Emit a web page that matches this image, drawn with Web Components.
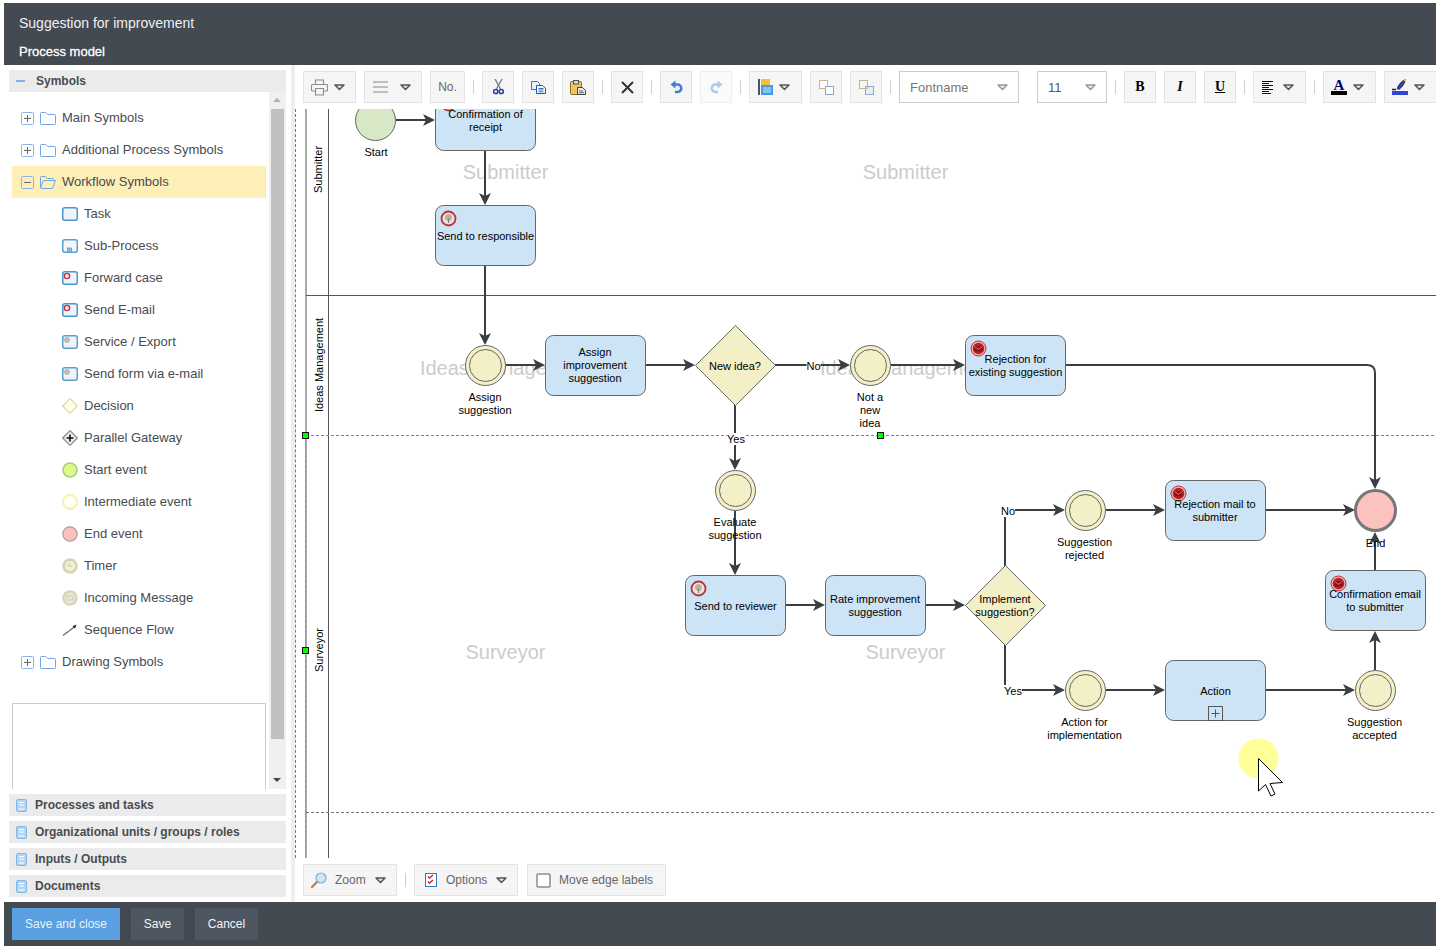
<!DOCTYPE html>
<html lang="en">
<head>
<meta charset="utf-8">
<title>Process model</title>
<style>
    html, body { margin: 0; height: 100%; background: #fff; overflow: hidden; }
    body { font-family: "Liberation Sans", Arial, sans-serif; }
</style>
</head>
<body>
<process-editor></process-editor>
<script>
const ICONS = {
    plus: `<svg width="13" height="13"><rect x=".5" y=".5" width="12" height="12" rx="1" fill="#fff" stroke="#8db3e6"/><path d="M3 6.5h7M6.5 3v7" stroke="#667" fill="none"/></svg>`,
    minus: `<svg width="13" height="13"><rect x=".5" y=".5" width="12" height="12" rx="1" fill="none" stroke="#8db3e6"/><path d="M3 6.5h7" stroke="#667" fill="none"/></svg>`,
    folder: `<svg width="16" height="13"><path d="M.5 11.5v-10a1 1 0 0 1 1-1h4l2 2h7a1 1 0 0 1 1 1v8a1 1 0 0 1-1 1h-13a1 1 0 0 1-1-1z" fill="#fff" stroke="#6ea6e4"/></svg>`,
    folderOpen: `<svg width="16" height="13"><path d="M.5 12V1.500a1 1 0 0 1 1-1h4l2 2h5a1 1 0 0 1 1 1V5M.5 12l3-7.500h12l-3 8H1z" fill="none" stroke="#6ea6e4"/></svg>`,
    task: `<svg width="16" height="14"><rect x=".75" y=".75" width="14.500" height="12.500" rx="2" fill="#eef3fb" stroke="#4d97cc" stroke-width="1.500"/></svg>`,
    sub: `<svg width="16" height="14"><rect x=".75" y=".75" width="14.500" height="12.500" rx="2" fill="#f3f6fb" stroke="#5b9fd0" stroke-width="1.500"/><rect x="5.500" y="9" width="4" height="4" fill="#8fb9da" stroke="#5b9fd0" stroke-width=".8"/></svg>`,
    forward: `<svg width="16" height="14"><rect x=".75" y=".75" width="14.500" height="12.500" rx="2" fill="#eef3fb" stroke="#4d97cc" stroke-width="1.500"/><circle cx="5" cy="5" r="2.600" fill="#eee" stroke="#c2343c" stroke-width="1.400"/></svg>`,
    service: `<svg width="16" height="14"><rect x=".75" y=".75" width="14.500" height="12.500" rx="2" fill="#eef3fb" stroke="#5b9fd0" stroke-width="1.500"/><circle cx="5" cy="5" r="3" fill="#bbb"/></svg>`,
    decision: `<svg width="16" height="16"><path d="M8 .7L15.300 8 8 15.300.7 8z" fill="#fffef6" stroke="#e2da92" stroke-width="1.200"/></svg>`,
    gateway: `<svg width="16" height="16"><path d="M8 .7L15.300 8 8 15.300.7 8z" fill="#eee" stroke="#8a8a8a" stroke-width="1.200"/><path d="M4.500 8h7M8 4.500v7" stroke="#111" stroke-width="1.600"/></svg>`,
    start: `<svg width="16" height="16"><circle cx="8" cy="8" r="7" fill="#dcf88a" stroke="#a5cf78" stroke-width="1.600"/></svg>`,
    inter: `<svg width="16" height="16"><circle cx="8" cy="8" r="7" fill="#fffff4" stroke="#f6f0ae" stroke-width="1.800"/></svg>`,
    end: `<svg width="16" height="16"><circle cx="8" cy="8" r="7.200" fill="#fdbfbf" stroke="#ab9c9c" stroke-width="1.200"/></svg>`,
    timer: `<svg width="16" height="16"><circle cx="8" cy="8" r="7.800" fill="#d6d6b2"/><circle cx="8" cy="8" r="5" fill="#f0f0e0"/><path d="M8 5.500L5.500 8H10.500" stroke="#c9c9a6" fill="none"/></svg>`,
    message: `<svg width="16" height="16"><circle cx="8" cy="8" r="7.800" fill="#d6d6b2"/><circle cx="8" cy="8" r="5.500" fill="#e9e9d2"/><rect x="5" y="6" width="6" height="4" fill="none" stroke="#ccc"/></svg>`,
    flow: `<svg width="16" height="14"><path d="M1 12.500L13 3.500" stroke="#666" stroke-width="1.200"/><path d="M10.500 3.200L14.500 1.500 13 5.500z" fill="#222"/></svg>`,
    book: `<svg width="11" height="13"><rect x=".5" y=".5" width="10" height="12" rx="1.500" fill="#b4d4f2" stroke="#7fb6e8"/><path d="M3 3.500h5M3 6h5M2.500 10h6" stroke="#fff" fill="none"/></svg>`,
    caret: `<svg width="11" height="7"><path d="M1 1h9L5.500 5.500z" fill="#e4e4e4" stroke="#555" stroke-width="1.500" stroke-linejoin="round"/></svg>`,
    caretLight: `<svg width="11" height="7"><path d="M1 1h9L5.500 5.500z" fill="#eee" stroke="#999" stroke-width="1.500" stroke-linejoin="round"/></svg>`,
    printer: `<svg width="17" height="17"><path d="M4.500 5.500V1h8v4.500M4.500 12H1.500a1 1 0 0 1-1-1V6.500a1 1 0 0 1 1-1h14a1 1 0 0 1 1 1V11a1 1 0 0 1-1 1h-3M4.500 9.500h8V16h-8z" fill="none" stroke="#8c8c8c" stroke-width="1.100"/></svg>`,
    menu: `<svg width="15" height="12"><path d="M0 1h15M0 6h15M0 11h15" stroke="#aaa" stroke-width="1.600"/></svg>`,
    cut: `<svg width="11" height="16"><path d="M2 0l5.500 10M9 0L3.500 10" stroke="#77808c" stroke-width="1.400" fill="none"/><circle cx="2.700" cy="12.500" r="2.100" fill="none" stroke="#26409c" stroke-width="1.500"/><circle cx="8.300" cy="12.500" r="2.100" fill="none" stroke="#26409c" stroke-width="1.500"/></svg>`,
    copy: `<svg width="15" height="13"><path d="M.5.500h6l2 2v6h-8z" fill="#eaf1fb" stroke="#3a6fc4"/><path d="M5.500 4.500h6l3 2.500v5.500h-9z" fill="#fff" stroke="#2255b0"/><path d="M7.500 7.500h5M7.500 9h5M7.500 10.800h5" stroke="#3a6fc4"/></svg>`,
    paste: `<svg width="16" height="15"><rect x=".5" y="1.500" width="11" height="13" rx="1" fill="#ecc560" stroke="#8a6a28"/><rect x="3.500" y=".5" width="5" height="3.500" fill="#d9d9d9" stroke="#555"/><path d="M7.500 7.500h5l3 3v4h-8z" fill="#e8e8f0" stroke="#444"/><path d="M9 11h4M9 12.700h5" stroke="#667"/></svg>`,
    close: `<svg width="13" height="13"><path d="M1 1l11 11M12 1L1 12" stroke="#333" stroke-width="2"/></svg>`,
    undo: `<svg width="13" height="14"><path d="M4.500 4.500h3a3.300 3.300 0 0 1 0 7.500H5" fill="none" stroke="#3c80dc" stroke-width="2.600"/><path d="M5.500.5v8L.5 4.500z" fill="#3c80dc"/></svg>`,
    redo: `<svg width="13" height="14"><path d="M8.500 4.500h-3a3.300 3.300 0 0 0 0 7.500H8" fill="none" stroke="#a9c9ee" stroke-width="2.600"/><path d="M7.500.5v8l5-4z" fill="#a9c9ee"/></svg>`,
    save: `<svg width="15" height="16"><rect x="0" y="0" width="2" height="16" fill="#47506e"/><rect x="3" y="0" width="9" height="6" fill="#f0c23c"/><rect x="3" y="6" width="12" height="10" fill="#4a9be4"/><rect x="5" y="8" width="8" height="6" fill="#84c2f2"/></svg>`,
    front: `<svg width="15" height="15"><rect x=".5" y=".5" width="8" height="8" fill="#fff" stroke="#c2b68a"/><rect x="6.500" y="6.500" width="8" height="8" fill="#fff" stroke="#8ea5c4"/></svg>`,
    back: `<svg width="15" height="15"><rect x="6.500" y="6.500" width="8" height="8" fill="#e6eef8" stroke="#8ea5c4"/><rect x=".5" y=".5" width="8" height="8" fill="none" stroke="#c2b68a"/></svg>`,
    align: `<svg width="12" height="13"><path d="M0 .5h11M0 2.500h7M0 4.500h11M0 6.500h7M0 8.500h11M0 10.500h7M0 12.500h9" stroke="#111"/></svg>`,
    fontColor: `<span style="display:block;width:16px;text-align:center;font:700 15px/12px 'Liberation Serif',serif;color:#000080;border-bottom:4px solid #000">A</span>`,
    pen: `<svg width="16" height="16"><path d="M5 9.500C6.500 6 9 2 13.500.5 13 4 10.500 8 7 10.500z" fill="#2b3fc0" stroke="#111" stroke-width=".6"/><path d="M11.500 1L14 .5 13.500 3z" fill="#ee3"/><path d="M0 10.500h4" stroke="#223" stroke-width="1.500"/><rect y="12" width="16" height="4" fill="#3344dd"/></svg>`,
    zoom: `<svg width="16" height="16"><path d="M1 15l5-5" stroke="#c8813c" stroke-width="2.400" stroke-linecap="round"/><circle cx="10" cy="6" r="5" fill="#cfe6f7" stroke="#7daed2" stroke-width="1.200"/></svg>`,
    options: `<svg width="12" height="14"><rect x=".5" y=".5" width="11" height="13" fill="#fff" stroke="#2f78d2"/><path d="M3 3.500l1.500 1.500L8 2M3 8.500l1.500 1.500L8 7" fill="none" stroke="#c82020" stroke-width="1.400"/></svg>`,
    box: `<svg width="15" height="15"><rect x="1" y="1" width="13" height="13" rx="1" fill="#fff" stroke="#8c8c8c" stroke-width="1.500"/></svg>`
};

class FormHeader extends HTMLElement {
    constructor() {
        super();
        this.attachShadow({ mode: 'open' });
        this.shadowRoot.innerHTML = `
        <style>
            :host { display: block; height: 62px; background: #434a52; color: #fff; padding: 12px 0 0 15px; box-sizing: border-box; }
            .title { font-size: 14px; line-height: 16px; color: #eef0f2; }
            .sub { font-size: 13px; line-height: 16px; margin-top: 13px; -webkit-text-stroke: .3px #fff; }
        </style>
        <div class="title"><slot name="title"></slot></div>
        <div class="sub"><slot name="sub"></slot></div>`;
    }
}
customElements.define('form-header', FormHeader);

class TreeItem extends HTMLElement {
    constructor() {
        super();
        this.attachShadow({ mode: 'open' });
    }
    connectedCallback() {
        const expander = this.getAttribute('expander');
        const icon = ICONS[this.getAttribute('icon')];
        this.shadowRoot.innerHTML = `
        <style>
            :host { display: flex; align-items: center; height: 32px; box-sizing: border-box; font-size: 13px; color: #474b52; white-space: nowrap; padding-left: 50px; }
            :host([expander]) { padding-left: 9px; }
            :host([selected]) { background: #feeeb8; }
            .ex { display: flex; margin-right: 6px; }
            .ic { display: flex; width: 16px; justify-content: center; margin-right: 6px; }
            .t { margin-bottom: 1px; }
        </style>
        ${expander ? `<span class="ex">${ICONS[expander]}</span>` : ''}
        <span class="ic">${icon}</span><span class="t"><slot></slot></span>`;
    }
}
customElements.define('tree-item', TreeItem);

class AccordionRow extends HTMLElement {
    constructor() {
        super();
        this.attachShadow({ mode: 'open' });
        this.shadowRoot.innerHTML = `
        <style>
            :host { display: flex; align-items: center; height: 22px; background: #ebebeb; font-size: 12px; font-weight: bold; color: #484c52; padding-left: 7px; margin-top: 5px; flex: none; }
            .ic { display: flex; margin-right: 8px; }
        </style>
        <span class="ic">${ICONS.book}</span><slot></slot>`;
    }
}
customElements.define('accordion-row', AccordionRow);

class SymbolPanel extends HTMLElement {
    constructor() {
        super();
        this.attachShadow({ mode: 'open' });
        this.shadowRoot.innerHTML = `
        <style>
            :host { display: flex; flex-direction: column; width: 277px; margin-left: 5px; padding: 5px 0; box-sizing: border-box; flex: none; }
            .head { display: flex; align-items: center; height: 22px; background: #ebebeb; font-size: 12px; font-weight: bold; color: #484c52; flex: none; }
            .head i { display: block; width: 9px; height: 1.500px; background: #7fb2e8; margin: 0 11px 0 7px; }
            .body { flex: 1; display: flex; min-height: 0; }
            .content { width: 260px; padding: 10px 3px 0; box-sizing: border-box; }
            .preview { height: 86px; margin-top: 25px; width: 254px; box-sizing: border-box; border: 1px solid #ccc; border-bottom: 0; }
            .bar { width: 17px; background: #f0f0f0; position: relative; padding: 17px 2px; box-sizing: border-box; display: flex; }
            .thumb { width: 13px; height: 630px; background: #c0c0c0; }
            .up, .down { position: absolute; left: 4px; width: 0; height: 0; border-left: 4px solid transparent; border-right: 4px solid transparent; }
            .up { top: 6px; border-bottom: 4px solid #b0b0b0; }
            .down { bottom: 7px; border-top: 4px solid #444; }
        </style>
        <div class="head"><i></i>Symbols</div>
        <div class="body">
            <div class="content">
                <slot></slot>
                <div class="preview"></div>
            </div>
            <div class="bar"><span class="up"></span><div class="thumb"></div><span class="down"></span></div>
        </div>
        <slot name="sections"></slot>`;
    }
}
customElements.define('symbol-panel', SymbolPanel);

class ToolButton extends HTMLElement {
    constructor() {
        super();
        this.attachShadow({ mode: 'open' });
    }
    connectedCallback() {
        const icon = ICONS[this.getAttribute('icon')] || '';
        const caret = this.hasAttribute('caret');
        this.shadowRoot.innerHTML = `
        <style>
            :host { display: flex; align-items: center; justify-content: center; flex: none; width: 32px; height: 32px; box-sizing: border-box; background: #f5f5f5; border: 1px solid #e4e4e4; font-size: 12px; color: #666; }
            :host([dropdown]) { justify-content: flex-start; padding-left: 7px; }
            :host([faded]) { background: #fafafa; border-color: #eee; }
            span { display: flex; }
            .caret { margin-left: var(--caret-gap, 6px); }
            .t { margin-left: var(--text-gap, 0); }
        </style>
        <span>${icon}</span><span class="t"><slot></slot></span>${caret ? `<span class="caret">${ICONS.caret}</span>` : ''}`;
    }
}
customElements.define('tool-button', ToolButton);

class ToolSelect extends HTMLElement {
    constructor() {
        super();
        this.attachShadow({ mode: 'open' });
        this.shadowRoot.innerHTML = `
        <style>
            :host { display: flex; align-items: center; justify-content: space-between; flex: none; height: 32px; box-sizing: border-box; background: #fff; border: 1px solid #ccc; font-size: 13px; color: #777; padding: 0 10px 0 10px; }
            span { display: flex; }
        </style>
        <slot></slot><span>${ICONS.caretLight}</span>`;
    }
}
customElements.define('tool-select', ToolSelect);

class ToolSep extends HTMLElement {
    constructor() {
        super();
        this.attachShadow({ mode: 'open' });
        this.shadowRoot.innerHTML = `<style>:host { display: block; flex: none; width: 1px; height: 14px; background: #d0d0d0; align-self: center; }</style>`;
    }
}
customElements.define('tool-sep', ToolSep);

class ToolBar extends HTMLElement {
    constructor() {
        super();
        this.attachShadow({ mode: 'open' });
        this.shadowRoot.innerHTML = `
        <style>
            :host { display: flex; gap: 8px; height: 44px; padding: 6px 0 6px 8px; box-sizing: border-box; flex: none; overflow: hidden; }
        </style>
        <slot></slot>`;
    }
}
customElements.define('tool-bar', ToolBar);

// diagram data, coordinates are the page's own (viewBox starts at 296,109)
const TASKS = [
    { x: 435.5, y: 90.5, lines: ['Confirmation of', 'receipt'], ty: 114, icon: 'bulb' },
    { x: 435.5, y: 205.5, lines: ['Send to responsible'], ty: 236, icon: 'bulb' },
    { x: 545.5, y: 335.5, lines: ['Assign', 'improvement', 'suggestion'], ty: 352, lx: 49.5 },
    { x: 965.5, y: 335.5, lines: ['Rejection for', 'existing suggestion'], ty: 359 },
    { x: 685.5, y: 575.5, lines: ['Send to reviewer'], ty: 606, icon: 'bulb' },
    { x: 825.5, y: 575.5, lines: ['Rate improvement', 'suggestion'], ty: 599, lx: 49.5 },
    { x: 1165.5, y: 480.5, lines: ['Rejection mail to', 'submitter'], ty: 504, icon: 'mail', lx: 49.5 },
    { x: 1165.5, y: 660.5, lines: ['Action'], ty: 691, plus: true },
    { x: 1325.5, y: 570.5, lines: ['Confirmation email', 'to submitter'], ty: 594, icon: 'mail', lx: 49.5 }
];
TASKS[3].icon = 'mail';
const EVENTS = [
    { x: 485.5, y: 365.5, lines: ['Assign', 'suggestion'], ty: 397, lx: -.5 },
    { x: 870.5, y: 365.5, lines: ['Not a', 'new', 'idea'], ty: 397, lx: -.5 },
    { x: 735.5, y: 490.5, lines: ['Evaluate', 'suggestion'], ty: 522, lx: -.5 },
    { x: 1085.5, y: 510.5, lines: ['Suggestion', 'rejected'], ty: 542, lx: -1 },
    { x: 1085.5, y: 690.5, lines: ['Action for', 'implementation'], ty: 722, lx: -1 },
    { x: 1375.5, y: 690.5, lines: ['Suggestion', 'accepted'], ty: 722, lx: -1 }
];
const DIAMONDS = [
    { x: 735.5, y: 365.5, lines: ['New idea?'], ty: 366 },
    { x: 1005.5, y: 605.5, lines: ['Implement', 'suggestion?'], ty: 599 }
];
// [path, tip x, tip y, direction]
const EDGES = [
    ['M396 120H431', 435, 120, 0],
    ['M485 151V201', 485, 205, 90],
    ['M485 266V341', 485, 345, 90],
    ['M506 365H541', 545, 365, 0],
    ['M646 365H691', 695, 365, 0],
    ['M775 365H846', 850, 365, 0],
    ['M891 365H961', 965, 365, 0],
    ['M1066 365H1367Q1375 365 1375 373V485', 1375, 489, 90],
    ['M735 405V466', 735, 470, 90],
    ['M735 511V571', 735, 575, 90],
    ['M786 605H821', 825, 605, 0],
    ['M926 605H961', 965, 605, 0],
    ['M1005 566V510H1061', 1065, 510, 0],
    ['M1106 510H1161', 1165, 510, 0],
    ['M1266 510H1351', 1355, 510, 0],
    ['M1005 645V690H1061', 1065, 690, 0],
    ['M1106 690H1161', 1165, 690, 0],
    ['M1266 690H1351', 1355, 690, 0],
    ['M1375 670V635', 1375, 631, -90],
    ['M1375 570V536', 1375, 532, -90]
];
const EDGE_LABELS = [
    ['No', 813.5, 366, 14], ['Yes', 736, 439, 18], ['No', 1008, 511, 14], ['Yes', 1013, 691, 18]
];

class ProcessDiagram extends HTMLElement {
    constructor() {
        super();
        this.attachShadow({ mode: 'open' });
        this.shadowRoot.innerHTML = `
        <style>
            :host { display: block; flex: 1; min-height: 0; border-left: 1px dashed #777; overflow: hidden; }
            svg { display: block; font-family: "Liberation Sans", Arial, sans-serif; font-size: 11px; }
            .wm { font-size: 20px; fill: #ccc; text-anchor: middle; }
            .lbl { fill: #000; text-anchor: middle; }
            .box { fill: #cde4f7; stroke: #666; }
            .yel { fill: #f3efc6; stroke: #666; }
        </style>
        ${this._svg()}`;
    }
    _text(lines, x, y) {
        return lines.map((l, i) => `<text class="lbl" x="${x}" y="${y + 4 + i * 13}">${l}</text>`).join('');
    }
    _taskIcon(type, x, y) {
        if (type === 'mail') {
            return `<circle cx="${x}" cy="${y}" r="7.500" fill="#f0b4b4" stroke="#c42a30" stroke-width="1"/>
                <circle cx="${x}" cy="${y}" r="5.800" fill="#bb1f27"/>
                <rect x="${x - 4}" y="${y - 2.500}" width="8" height="5.500" rx=".8" fill="#8c1218"/>
                <path d="M${x - 4} ${y - 2}l4 2.800 4-2.800" fill="none" stroke="#eaa6a6" stroke-width=".7"/>`;
        }
        return `<circle cx="${x}" cy="${y}" r="7" fill="#ece4de" stroke="#b8343a" stroke-width="1.800"/>
            <circle cx="${x}" cy="${y - 1}" r="3.400" fill="#c2aca4"/>
            <path d="M${x} ${y}v4.500" stroke="#8a7a74" stroke-width="1.200"/>`;
    }
    _svg() {
        const lanes = `
            <path d="M306 109V858M328.500 109V858M306 295.500H1436" fill="none" stroke="#555"/>
            <path d="M306 435.500H1436M306 812.500H1436" fill="none" stroke="#777" stroke-dasharray="3 2"/>
            <path d="M306 435.500H1436M305.500 435V858" fill="none" stroke="#2c2" stroke-width=".6" stroke-dasharray="3 2"/>`;
        const laneNames = [['Submitter', 169.5, 322], ['Ideas Management', 365, 323], ['Surveyor', 650, 323]]
            .map(([t, y, x]) => `<text class="lbl" transform="translate(${x} ${y}) rotate(-90)">${t}</text>`).join('');
        const marks = [['Submitter', 179], ['Ideas Management', 374.5], ['Surveyor', 659]]
            .map(([t, y]) => `<text class="wm" x="505.500" y="${y}">${t}</text><text class="wm" x="905.500" y="${y}">${t}</text>`).join('');
        const edges = EDGES.map(([d, x, y, r]) => `
            <path d="${d}" fill="none" stroke="#3b3e43" stroke-width="2"/>
            <path d="M0 0L-12 -6L-9 0L-12 6z" transform="translate(${x} ${y}) rotate(${r})" fill="#3b3e43"/>`).join('');
        const tasks = TASKS.map(t => `
            <rect class="box" x="${t.x}" y="${t.y}" width="100" height="60" rx="8"/>
            ${t.icon ? this._taskIcon(t.icon, t.x + 13, t.y + 13) : ''}
            ${t.plus ? `<rect x="${t.x + 43}" y="${t.y + 46}" width="14" height="14" fill="none" stroke="#555"/><path d="M${t.x + 46} ${t.y + 53}h8M${t.x + 50} ${t.y + 49}v8" stroke="#555"/>` : ''}
            ${this._text(t.lines, t.x + (t.lx || 50), t.ty)}`).join('');
        const events = EVENTS.map(e => `
            <circle class="yel" cx="${e.x}" cy="${e.y}" r="20"/>
            <circle class="yel" cx="${e.x}" cy="${e.y}" r="16"/>
            ${this._text(e.lines, e.x + e.lx, e.ty)}`).join('');
        const diamonds = DIAMONDS.map(d => `
            <path class="yel" d="M${d.x} ${d.y - 40}L${d.x + 40} ${d.y}L${d.x} ${d.y + 40}L${d.x - 40} ${d.y}z"/>
            ${this._text(d.lines, d.x - .5, d.ty)}`).join('');
        const edgeLabels = EDGE_LABELS.map(([t, x, y, w]) => `
            <rect x="${x - w / 2}" y="${y - 6}" width="${w}" height="12" fill="#fff"/>
            <text class="lbl" x="${x}" y="${y + 4}">${t}</text>`).join('');
        const handles = [[305.5, 435.5], [880.5, 435.5], [305.5, 650.5]]
            .map(([x, y]) => `<rect x="${x - 3}" y="${y - 3}" width="6" height="6" fill="#0f0" stroke="#111"/>`).join('');
        return `
        <svg width="1140" height="749" viewBox="296 109 1140 749">
            ${marks}
            ${lanes}
            ${laneNames}
            ${edges}
            <circle cx="375.500" cy="120.500" r="20" fill="#d8e8c6" stroke="#666"/>
            ${this._text(['Start'], 376, 152)}
            ${tasks}
            ${events}
            ${diamonds}
            <circle cx="1375.500" cy="510.500" r="20" fill="#fcc2c0" stroke="#777" stroke-width="3"/>
            ${this._text(['End'], 1375.5, 543)}
            ${edgeLabels}
            ${handles}
            <circle cx="1258.500" cy="758.500" r="20" fill="#ffff99"/>
            <path d="M1258.500 758.500L1282.500 782.500L1270 783.500L1275 794L1271 796L1265.500 784.500L1258.500 791z" fill="#fff" stroke="#000"/>
        </svg>`;
    }
}
customElements.define('process-diagram', ProcessDiagram);

class FootButton extends HTMLElement {
    constructor() {
        super();
        this.attachShadow({ mode: 'open' });
        this.shadowRoot.innerHTML = `
        <style>
            :host { display: flex; align-items: center; justify-content: center; height: 32px; background: #4e5761; color: #f2f3f4; font-size: 12px; }
            :host([primary]) { background: #5a9fdf; color: #e9f2fb; }
        </style>
        <slot></slot>`;
    }
}
customElements.define('foot-button', FootButton);

class ProcessEditor extends HTMLElement {
    constructor() {
        super();
        this.attachShadow({ mode: 'open' });
        this.shadowRoot.innerHTML = `
        <style>
            :host { display: flex; flex-direction: column; height: 950px; padding: 3px 0 4px 4px; box-sizing: border-box; font-family: "Liberation Sans", Arial, sans-serif; }
            .main { flex: 1; display: flex; min-height: 0; }
            .split { width: 4px; margin-left: 5px; background: #eee; flex: none; }
            .work { flex: 1; min-width: 0; display: flex; flex-direction: column; }
            footer { display: flex; gap: 11px; height: 44px; padding: 6px 0 0 8px; background: #434a52; box-sizing: border-box; flex: none; }
            .bold { font-family: "Liberation Serif", serif; font-weight: bold; font-size: 14px; color: #000; }
            .ital { font-style: italic; }
            .under { text-decoration: underline; }
        </style>
        <form-header>
            <span slot="title">Suggestion for improvement</span>
            <span slot="sub">Process model</span>
        </form-header>
        <div class="main">
            <symbol-panel>
                <tree-item expander="plus" icon="folder">Main Symbols</tree-item>
                <tree-item expander="plus" icon="folder">Additional Process Symbols</tree-item>
                <tree-item expander="minus" icon="folderOpen" selected>Workflow Symbols</tree-item>
                <tree-item icon="task">Task</tree-item>
                <tree-item icon="sub">Sub-Process</tree-item>
                <tree-item icon="forward">Forward case</tree-item>
                <tree-item icon="forward">Send E-mail</tree-item>
                <tree-item icon="service">Service / Export</tree-item>
                <tree-item icon="service">Send form via e-mail</tree-item>
                <tree-item icon="decision">Decision</tree-item>
                <tree-item icon="gateway">Parallel Gateway</tree-item>
                <tree-item icon="start">Start event</tree-item>
                <tree-item icon="inter">Intermediate event</tree-item>
                <tree-item icon="end">End event</tree-item>
                <tree-item icon="timer">Timer</tree-item>
                <tree-item icon="message">Incoming Message</tree-item>
                <tree-item icon="flow">Sequence Flow</tree-item>
                <tree-item expander="plus" icon="folder">Drawing Symbols</tree-item>
                <accordion-row slot="sections">Processes and tasks</accordion-row>
                <accordion-row slot="sections">Organizational units / groups / roles</accordion-row>
                <accordion-row slot="sections">Inputs / Outputs</accordion-row>
                <accordion-row slot="sections">Documents</accordion-row>
            </symbol-panel>
            <div class="split"></div>
            <div class="work">
                <tool-bar>
                    <tool-button icon="printer" caret dropdown style="width:53px"></tool-button>
                    <tool-button icon="menu" caret dropdown style="width:58px;padding-left:8px;--caret-gap:12px"></tool-button>
                    <tool-button style="width:35px">No.</tool-button>
                    <tool-sep></tool-sep>
                    <tool-button icon="cut"></tool-button>
                    <tool-button icon="copy"></tool-button>
                    <tool-button icon="paste"></tool-button>
                    <tool-sep></tool-sep>
                    <tool-button icon="close"></tool-button>
                    <tool-sep></tool-sep>
                    <tool-button icon="undo"></tool-button>
                    <tool-button icon="redo" faded></tool-button>
                    <tool-sep></tool-sep>
                    <tool-button icon="save" caret dropdown style="width:53px;padding-left:8px"></tool-button>
                    <tool-button icon="front"></tool-button>
                    <tool-button icon="back"></tool-button>
                    <tool-sep></tool-sep>
                    <tool-select style="width:120px">Fontname</tool-select>
                    <tool-select style="width:70px;margin-left:10px;color:#555">11</tool-select>
                    <tool-sep></tool-sep>
                    <tool-button><span class="bold">B</span></tool-button>
                    <tool-button><span class="bold ital">I</span></tool-button>
                    <tool-button><span class="bold under">U</span></tool-button>
                    <tool-sep></tool-sep>
                    <tool-button icon="align" caret dropdown style="width:53px;padding-left:8px;--caret-gap:9px"></tool-button>
                    <tool-sep></tool-sep>
                    <tool-button icon="fontColor" caret dropdown style="width:53px;padding-left:7px"></tool-button>
                    <tool-button icon="pen" caret dropdown style="width:53px;padding-left:7px"></tool-button>
                </tool-bar>
                <process-diagram></process-diagram>
                <tool-bar>
                    <tool-button icon="zoom" caret dropdown style="width:94px;--text-gap:8px;padding-left:7px;--caret-gap:9px">Zoom</tool-button>
                    <tool-sep></tool-sep>
                    <tool-button icon="options" caret dropdown style="width:104px;--text-gap:9px;padding-left:10px;--caret-gap:9px">Options</tool-button>
                    <tool-button icon="box" dropdown style="width:139px;margin-left:1px;--text-gap:8px;padding-left:8px">Move edge labels</tool-button>
                </tool-bar>
            </div>
        </div>
        <footer>
            <foot-button primary style="width:108px">Save and close</foot-button>
            <foot-button style="width:53px">Save</foot-button>
            <foot-button style="width:63px">Cancel</foot-button>
        </footer>`;
    }
}
customElements.define('process-editor', ProcessEditor);
</script>
</body>
</html>
